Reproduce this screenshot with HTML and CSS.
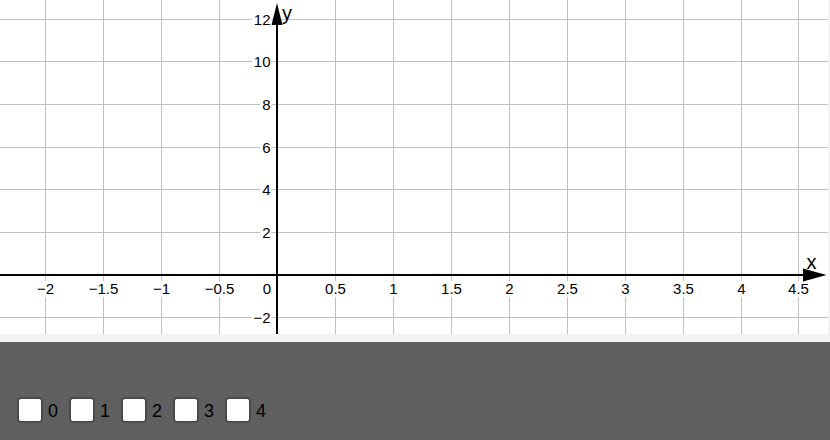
FILE: index.html
```html
<!DOCTYPE html>
<html lang="en">
<head>
<meta charset="utf-8">
<title>Graph</title>
<link rel="stylesheet" href="styles.css">
</head>
<body>
<div class="app">
  <div class="view">
    <svg class="graph" width="828" height="334" viewBox="0 0 828 334">
      <g class="grid">
        <line x1="45.5" y1="0" x2="45.5" y2="334"/>
        <line x1="103.5" y1="0" x2="103.5" y2="334"/>
        <line x1="161.5" y1="0" x2="161.5" y2="334"/>
        <line x1="219.5" y1="0" x2="219.5" y2="334"/>
        <line x1="335.5" y1="0" x2="335.5" y2="334"/>
        <line x1="393.5" y1="0" x2="393.5" y2="334"/>
        <line x1="451.5" y1="0" x2="451.5" y2="334"/>
        <line x1="509.5" y1="0" x2="509.5" y2="334"/>
        <line x1="567.5" y1="0" x2="567.5" y2="334"/>
        <line x1="625.5" y1="0" x2="625.5" y2="334"/>
        <line x1="683.5" y1="0" x2="683.5" y2="334"/>
        <line x1="741.5" y1="0" x2="741.5" y2="334"/>
        <line x1="798.5" y1="0" x2="798.5" y2="334"/>
        <line x1="0" y1="19.5" x2="828" y2="19.5"/>
        <line x1="0" y1="61.5" x2="828" y2="61.5"/>
        <line x1="0" y1="104.5" x2="828" y2="104.5"/>
        <line x1="0" y1="147.5" x2="828" y2="147.5"/>
        <line x1="0" y1="189.5" x2="828" y2="189.5"/>
        <line x1="0" y1="232.5" x2="828" y2="232.5"/>
        <line x1="0" y1="317.5" x2="828" y2="317.5"/>
      </g>
      <g class="label-bg">
        <rect x="35.5" y="281" width="20" height="16"/>
        <rect x="87.2" y="281" width="32.6" height="16"/>
        <rect x="151.5" y="281" width="20" height="16"/>
        <rect x="203.2" y="281" width="32.6" height="16"/>
        <rect x="323.6" y="281" width="23.8" height="16"/>
        <rect x="387.8" y="281" width="11.4" height="16"/>
        <rect x="439.6" y="281" width="23.8" height="16"/>
        <rect x="503.8" y="281" width="11.4" height="16"/>
        <rect x="555.6" y="281" width="23.8" height="16"/>
        <rect x="619.8" y="281" width="11.4" height="16"/>
        <rect x="671.6" y="281" width="23.8" height="16"/>
        <rect x="735.8" y="281" width="11.4" height="16"/>
        <rect x="786.6" y="281" width="23.8" height="16"/>
        <rect x="251.8" y="12.5" width="19.7" height="15"/>
        <rect x="251.8" y="54.5" width="19.7" height="15"/>
        <rect x="260.2" y="97.5" width="11.3" height="15"/>
        <rect x="260.2" y="140.5" width="11.3" height="15"/>
        <rect x="260.2" y="182.5" width="11.3" height="15"/>
        <rect x="260.2" y="225.5" width="11.3" height="15"/>
        <rect x="251.4" y="310.5" width="20.1" height="15"/>
      </g>
      <g class="axes">
        <rect x="0" y="274" width="806" height="2"/>
        <rect x="276" y="20" width="2" height="314"/>
        <polygon points="277,3 271.5,25 282.5,25"/>
        <polygon points="803,268.5 826.5,275 803,281.5"/>
      </g>
      <g class="tick xt">
        <text x="45.5" y="294">−2</text>
        <text x="103.5" y="294">−1.5</text>
        <text x="161.5" y="294">−1</text>
        <text x="219.5" y="294">−0.5</text>
        <text x="335.5" y="294">0.5</text>
        <text x="393.5" y="294">1</text>
        <text x="451.5" y="294">1.5</text>
        <text x="509.5" y="294">2</text>
        <text x="567.5" y="294">2.5</text>
        <text x="625.5" y="294">3</text>
        <text x="683.5" y="294">3.5</text>
        <text x="741.5" y="294">4</text>
        <text x="798.5" y="294">4.5</text>
      </g>
      <g class="tick yt">
        <text x="271" y="294">0</text>
        <text x="270.5" y="25">12</text>
        <text x="270.5" y="67">10</text>
        <text x="270.5" y="110">8</text>
        <text x="270.5" y="153">6</text>
        <text x="270.5" y="195">4</text>
        <text x="270.5" y="238">2</text>
        <text x="270.5" y="323">−2</text>
      </g>
      <text class="axis-name" x="282" y="19.5">y</text>
      <text class="axis-name" x="806.5" y="269">x</text>
    </svg>
  </div>
  <div class="panel">
    <label class="cb"><span class="box"></span><span class="num">0</span></label>
    <label class="cb"><span class="box"></span><span class="num">1</span></label>
    <label class="cb"><span class="box"></span><span class="num">2</span></label>
    <label class="cb"><span class="box"></span><span class="num">3</span></label>
    <label class="cb"><span class="box"></span><span class="num">4</span></label>
  </div>
</div>
</body>
</html>
```

FILE: styles.css
```css
html, body {
  margin: 0;
  padding: 0;
}
body {
  width: 830px;
  height: 440px;
  overflow: hidden;
  background: #f3f3f3;
  font-family: "Liberation Sans", Arial, sans-serif;
}
.app {
  display: flex;
  flex-direction: column;
  gap: 8px;
  height: 440px;
}
.view {
  width: 828px;
  height: 334px;
  background: #ffffff;
}
.graph {
  display: block;
}
.grid line {
  stroke: #c0c0c0;
  stroke-width: 1;
}
.label-bg rect {
  fill: #ffffff;
}
.axes rect,
.axes polygon {
  fill: #000000;
}
.tick text {
  font-family: "Liberation Sans", Arial, sans-serif;
  font-size: 15px;
  fill: #000000;
}
.xt text {
  text-anchor: middle;
}
.yt text {
  text-anchor: end;
}
.axis-name {
  font-family: "Liberation Sans", Arial, sans-serif;
  font-size: 20px;
  fill: #000000;
}
.panel {
  flex: 1;
  background: #5f5f5f;
  display: flex;
  align-items: flex-start;
  gap: 11px;
  padding: 55px 0 0 17px;
}
.cb {
  display: flex;
  align-items: center;
  gap: 5px;
  height: 26px;
}
.box {
  box-sizing: border-box;
  width: 26px;
  height: 26px;
  background: #ffffff;
  border: 2px solid #4b4b4b;
  border-radius: 4px;
}
.num {
  font-size: 18px;
  line-height: 26px;
  color: #000000;
  padding-top: 2px;
}
```
